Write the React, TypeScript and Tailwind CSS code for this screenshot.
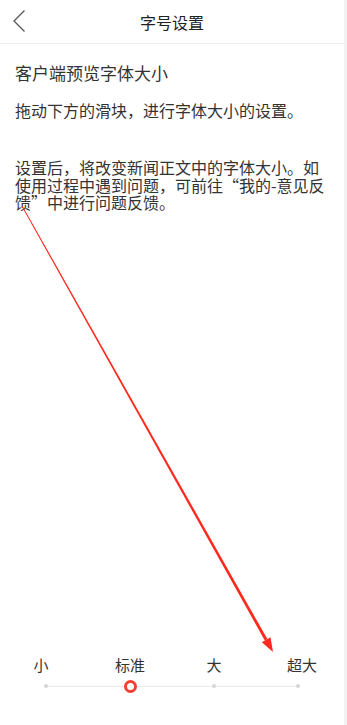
const steps = ['小', '标准', '大', '超大']
const active = 1

function SizeSlider() {
  return (
    <div className="px-[4px] pb-[32px]">
      <div className="grid grid-cols-4 text-[15px] leading-[20px] text-[#333]">
        {steps.map((s, i) => (
          <span
            key={s}
            className={
              i === 0
                ? 'text-center -ml-[10px]'
                : i === 3
                  ? 'text-center ml-[8px]'
                  : 'text-center'
            }
          >
            {s}
          </span>
        ))}
      </div>
      <div className="relative mt-[4px] h-[14px] mx-[41.6px]">
        <div className="absolute left-0 right-0 top-[6.5px] h-px bg-[#ebebeb]" />
        <div className="relative flex h-full items-center justify-between">
          {steps.map((s, i) =>
            i === active ? (
              <span
                key={s}
                className="relative -mx-[6px] h-[13px] w-[13px] rounded-full border-[3px] border-[#f2412f] bg-white"
              />
            ) : (
              <span key={s} className="relative -mx-[2px] h-[4px] w-[4px] rounded-full bg-[#d6d6d6]" />
            )
          )}
        </div>
      </div>
    </div>
  )
}

function Annotation() {
  return (
    <svg className="pointer-events-none absolute inset-0" width="347" height="725" viewBox="0 0 347 725">
      <polygon points="21.6,206.3 22.4,205.7 267.4,639.1 264.8,640.5" fill="#ff2a1f" />
      <polygon points="273,652 261.8,642.3 270.5,637.3" fill="#ff2a1f" />
    </svg>
  )
}

export default function App() {
  return (
    <div
      className="relative flex h-[725px] w-[347px] bg-white"
      style={{ fontFamily: '"Noto Sans CJK SC", "Noto Sans", sans-serif' }}
    >
      <div className="flex w-[344px] flex-col">
        <header className="relative flex h-[44px] shrink-0 items-center justify-center border-b border-[#eeeeee]">
          <svg className="absolute left-0 top-0" width="40" height="43" viewBox="0 0 40 43">
            <polyline points="24.5,10.5 14,21 24.5,31.5" fill="none" stroke="#555" strokeWidth="1.3" />
          </svg>
          <h1 className="text-[16px] text-[#222]">字号设置</h1>
        </header>
        <div className="px-[15px] pt-[17px] text-[#333]">
          <h2 className="text-[17px] leading-[24px]">客户端预览字体大小</h2>
          <p className="mt-[13px] text-[16px] leading-[24px]">拖动下方的滑块，进行字体大小的设置。</p>
          <p className="mt-[37px] pr-[1px] text-[16px] leading-[17.5px]">
            设置后，将改变新闻正文中的字体大小。如使用过程中遇到问题，可前往“我的-意见反馈”中进行问题反馈。
          </p>
        </div>
        <div className="mt-auto">
          <SizeSlider />
        </div>
      </div>
      <div className="w-[3px] bg-[#f2f2f2]" />
      <Annotation />
    </div>
  )
}
